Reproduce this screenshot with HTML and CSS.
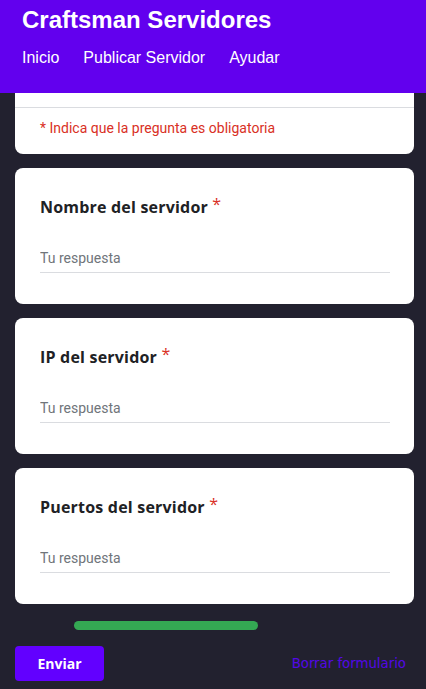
FILE: index.html
```html
<!DOCTYPE html>
<html lang="es">
<head>
<meta charset="utf-8">
<title>Craftsman Servidores</title>
<link rel="stylesheet" href="styles.css">
</head>
<body>
<header class="topbar">
  <h1 class="brand">Craftsman Servidores</h1>
  <nav class="nav">
    <a href="#">Inicio</a>
    <a href="#">Publicar Servidor</a>
    <a href="#">Ayudar</a>
  </nav>
</header>
<main class="form">
  <section class="card card-intro">
    <div class="intro-top"></div>
    <p class="required-note">* Indica que la pregunta es obligatoria</p>
  </section>
  <section class="card">
    <h2 class="q-title">Nombre del servidor <span class="star">*</span></h2>
    <input class="answer" type="text" placeholder="Tu respuesta">
  </section>
  <section class="card">
    <h2 class="q-title">IP del servidor <span class="star">*</span></h2>
    <input class="answer" type="text" placeholder="Tu respuesta">
  </section>
  <section class="card">
    <h2 class="q-title">Puertos del servidor <span class="star">*</span></h2>
    <input class="answer" type="text" placeholder="Tu respuesta">
  </section>
  <div class="progress"><div class="progress-fill"></div></div>
  <div class="actions">
    <button class="submit" type="button">Enviar</button>
    <a class="clear" href="#">Borrar formulario</a>
  </div>
</main>
</body>
</html>
```
FILE: styles.css
```css
* { box-sizing: border-box; }
html, body { margin: 0; padding: 0; }
body {
  background: #22212f;
  font-family: Roboto, "Liberation Sans", sans-serif;
  min-height: 689px;
}
.topbar {
  background: #6200ee;
  height: 93px;
  padding: 7px 22px 0;
  color: #fff;
}
.brand {
  margin: 0;
  font-family: "Liberation Sans", Arial, sans-serif;
  font-size: 24px;
  font-weight: 700;
  line-height: 26px;
}
.nav {
  display: flex;
  gap: 24px;
  margin-top: 16px;
}
.nav a {
  color: #fff;
  text-decoration: none;
  font-family: "Liberation Sans", Arial, sans-serif;
  font-size: 16px;
  line-height: 18px;
}
.form {
  display: flex;
  flex-direction: column;
  gap: 14px;
  padding: 0 12px 0 15px;
}
.card {
  background: #fff;
  border-radius: 8px;
  height: 136px;
  padding: 27px 24px 0 25px;
  display: flex;
  flex-direction: column;
}
.card-intro {
  height: auto;
  border-radius: 0 0 8px 8px;
  padding: 0 0 16px;
}
.intro-top {
  height: 15px;
  border-bottom: 1px solid #dadce0;
}
.required-note {
  margin: 10px 0 0 25px;
  color: #d93025;
  font-size: 14px;
  line-height: 20px;
}
.q-title {
  margin: 0;
  font-family: "Open Sans", Lato, sans-serif;
  font-size: 16px;
  font-weight: 700;
  line-height: 24px;
  color: #202124;
  letter-spacing: 0.2px;
}
.star {
  color: #d93025;
  font-weight: 400;
  line-height: 18px;
  vertical-align: top;
}
.answer {
  margin-top: 25px;
  width: 350px;
  height: 29px;
  border: 0;
  border-bottom: 1px solid #dadce0;
  padding: 0;
  font-family: Roboto, sans-serif;
  font-size: 14px;
  color: #202124;
  background: transparent;
  outline: none;
}
.answer::placeholder { color: #70757a; }
.progress {
  margin: 3px 0 0 59px;
  width: 184px;
  height: 9px;
}
.progress-fill {
  width: 100%;
  height: 100%;
  background: #34a853;
  border-radius: 5px;
}
.actions {
  display: flex;
  justify-content: space-between;
  align-items: center;
  margin-top: 2px;
  padding-right: 8px;
}
.submit {
  width: 89px;
  height: 35px;
  border: 0;
  border-radius: 4px;
  background: #6200ff;
  color: #fff;
  font-family: "Open Sans", Lato, sans-serif;
  font-weight: 700;
  font-size: 14px;
}
.clear {
  color: #5308e6;
  text-decoration: none;
  font-family: "DejaVu Sans", Verdana, sans-serif;
  font-size: 13.3px;
}
```
